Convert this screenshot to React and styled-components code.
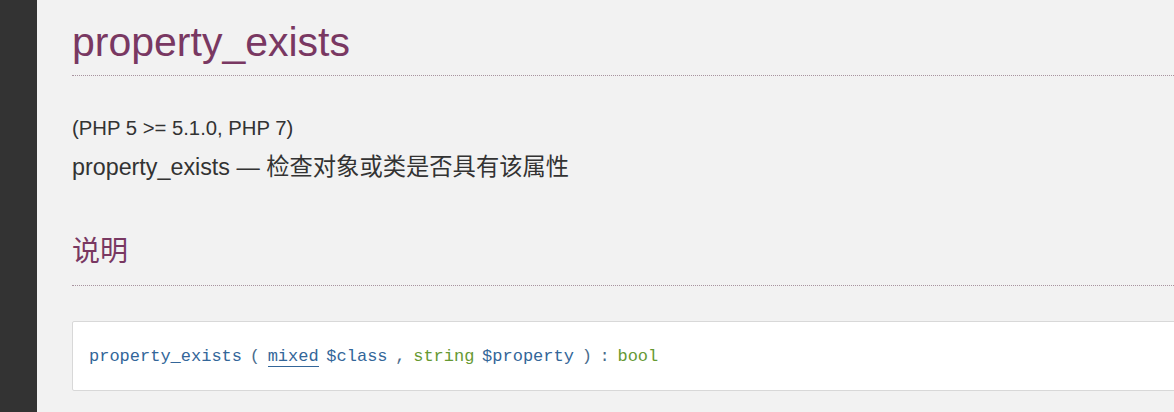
import styled, { createGlobalStyle } from 'styled-components'

const GlobalStyle = createGlobalStyle`
  html, body {
    margin: 0;
    padding: 0;
    background: #f2f2f2;
  }
  body {
    font-family: "Liberation Sans", Arial, "Noto Sans CJK SC", sans-serif;
    color: #333;
  }
`

const Page = styled.div`
  display: flex;
  min-height: 412px;
  overflow: hidden;
`

const Sidebar = styled.aside`
  flex: 0 0 37px;
  background: #333;
`

const Content = styled.main`
  flex: 1;
  padding-left: 35px;
  margin-right: -20px;
`

const Title = styled.h1`
  margin: 18px 0 0;
  padding-bottom: 9px;
  font-size: 41px;
  line-height: 48px;
  font-weight: normal;
  color: #793862;
  border-bottom: 1px dotted #a8949f;
`

const Version = styled.p`
  margin: 37px 0 0;
  font-size: 20.3px;
  line-height: 30px;
`

const Purpose = styled.p`
  margin: 7px 0 0;
  font-size: 23.3px;
  line-height: 34px;
`

const Section = styled.h2`
  margin: 48px 0 0;
  padding-bottom: 13px;
  font-size: 28px;
  line-height: 40px;
  font-weight: normal;
  color: #793862;
  border-bottom: 1px dotted #a8949f;
`

const Synopsis = styled.div`
  margin-top: 35px;
  padding: 16px 16px 15px;
  background: #fff;
  border: 1px solid #d8d8d8;
  border-radius: 2px;
  font-family: "Liberation Mono", "DejaVu Sans Mono", monospace;
  font-size: 17px;
  line-height: 37px;
  word-spacing: -2.5px;
  color: #4a6c8c;
`

const Token = styled.span`
  color: ${p => p.$tone === 'type' ? '#693' : '#369'};
`

const TypeLink = styled.a`
  color: #369;
  text-decoration: none;
  border-bottom: 1px solid #369;
`

export default function App() {
  return (
    <Page>
      <GlobalStyle />
      <Sidebar />
      <Content>
        <Title>property_exists</Title>
        <Version>(PHP 5 &gt;= 5.1.0, PHP 7)</Version>
        <Purpose>property_exists — 检查对象或类是否具有该属性</Purpose>
        <Section>说明</Section>
        <Synopsis>
          <Token>property_exists</Token> ( <TypeLink href="#mixed">mixed</TypeLink> <Token>$class</Token> , <Token $tone="type">string</Token> <Token>$property</Token> ) : <Token $tone="type">bool</Token>
        </Synopsis>
      </Content>
    </Page>
  )
}
